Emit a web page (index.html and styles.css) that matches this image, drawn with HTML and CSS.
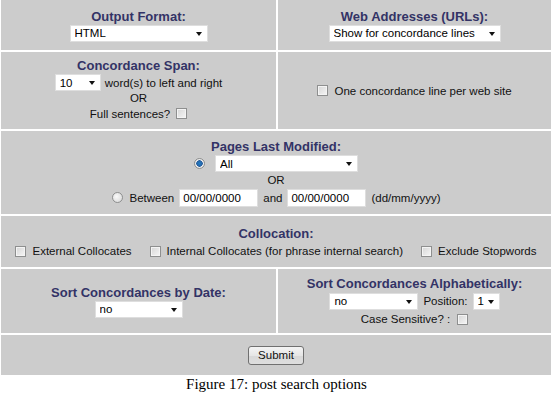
FILE: index.html
```html
<!DOCTYPE html>
<html>
<head>
<meta charset="utf-8">
<title>Post search options</title>
<link rel="stylesheet" href="styles.css">
</head>
<body>
<form class="options">
  <div class="cell">
    <h2 class="heading">Output Format:</h2>
    <span class="select w-format"><select><option>HTML</option></select></span>
  </div>
  <div class="cell">
    <h2 class="heading">Web Addresses (URLs):</h2>
    <span class="select w-urls"><select><option>Show for concordance lines</option></select></span>
  </div>

  <div class="cell">
    <h2 class="heading">Concordance Span:</h2>
    <div class="line">
      <span class="select w-span"><select><option>10</option></select></span>
      <span>word(s) to left and right</span>
    </div>
    <div class="or">OR</div>
    <label class="line tall">Full sentences? <input type="checkbox" class="cb"></label>
  </div>
  <div class="cell">
    <label class="line check"><input type="checkbox" class="cb"> One concordance line per web site</label>
  </div>

  <div class="cell wide pages">
    <h2 class="heading">Pages Last Modified:</h2>
    <div class="line">
      <input type="radio" name="when" class="radio" checked>
      <span class="select w-pages"><select><option>All</option></select></span>
    </div>
    <div class="or">OR</div>
    <div class="line between">
      <input type="radio" name="when" class="radio">
      <span>Between</span>
      <input type="text" class="date" value="00/00/0000">
      <span>and</span>
      <input type="text" class="date" value="00/00/0000">
      <span>(dd/mm/yyyy)</span>
    </div>
  </div>

  <div class="cell wide colloc">
    <h2 class="heading">Collocation:</h2>
    <div class="line checks">
      <label class="check"><input type="checkbox" class="cb"> External Collocates</label>
      <label class="check"><input type="checkbox" class="cb"> Internal Collocates (for phrase internal search)</label>
      <label class="check"><input type="checkbox" class="cb"> Exclude Stopwords</label>
    </div>
  </div>

  <div class="cell">
    <h2 class="heading">Sort Concordances by Date:</h2>
    <span class="select w-date"><select><option>no</option></select></span>
  </div>
  <div class="cell alpha">
    <h2 class="heading">Sort Concordances Alphabetically:</h2>
    <div class="line">
      <span class="select w-alpha"><select><option>no</option></select></span>
      <span>Position:</span>
      <span class="select w-pos"><select><option>1</option></select></span>
    </div>
    <label class="line">Case Sensitive? : <input type="checkbox" class="cb"></label>
  </div>

  <div class="cell wide">
    <button type="button" class="submit">Submit</button>
  </div>
</form>
<p class="caption">Figure 17: post search options</p>
</body>
</html>
```
FILE: styles.css
```css
body {
  margin: 0;
  width: 553px;
  background: #fff;
  font-family: "Liberation Sans", Arial, sans-serif;
  font-size: 11.5px;
  color: #111;
}
*, *:before, *:after { box-sizing: border-box; }

.options {
  display: grid;
  grid-template-columns: 275px 273px;
  grid-template-rows: 50px 77px 83px 51px 64px 40px;
  gap: 2px;
  margin: 0;
  padding-left: 1px;
}
.cell {
  background: #cccccc;
  display: flex;
  flex-direction: column;
  align-items: center;
  justify-content: center;
}
.wide { grid-column: 1 / -1; }

.heading {
  margin: 0;
  font-size: 13px;
  font-weight: bold;
  line-height: 16px;
  color: #333366;
}
.line {
  display: flex;
  align-items: center;
  gap: 4px;
  height: 18px;
}
.line.tall { height: 20px; }
.or { line-height: 12px; }
.pages .or { line-height: 15px; }
.pages .heading { line-height: 17px; }
.pages .line { height: 18px; }
.pages .line.between { height: 20px; gap: 5px; }
.colloc { padding-top: 3px; }
.alpha { padding-top: 2px; }
.alpha .line { gap: 5px; }

/* selects: flat white box with a small black arrow */
.select {
  position: relative;
  display: inline-block;
  height: 17px;
}
.select select {
  appearance: none;
  -webkit-appearance: none;
  width: 100%;
  height: 17px;
  margin: 0;
  padding: 0 0 0 4px;
  border: 1px solid #dedede;
  border-radius: 0;
  background: #fff;
  font-family: inherit;
  font-size: 11.5px;
  color: #000;
}
.select:after {
  content: "";
  position: absolute;
  right: 6px;
  top: 7px;
  border-left: 3.5px solid transparent;
  border-right: 3.5px solid transparent;
  border-top: 4px solid #111;
  pointer-events: none;
}
.w-format { width: 138px; }
.w-urls { width: 172px; }
.w-span { width: 46px; }
.w-pages { width: 143px; margin-left: 4px; }
.w-date { width: 88px; }
.w-alpha { width: 89px; }
.w-pos { width: 27px; }

/* checkboxes and radios */
.cb {
  appearance: none;
  -webkit-appearance: none;
  width: 11px;
  height: 11px;
  margin: 0 0 0 2px;
  border: 1px solid #8e8f8f;
  box-shadow: inset 0 0 0 1px #f4f4f4;
  background: linear-gradient(135deg, #d6d6d6, #f6f6f6);
}
.check {
  display: inline-flex;
  align-items: center;
  gap: 6px;
}
.check .cb { margin: 0; }
.checks { gap: 18px; }

.radio {
  appearance: none;
  -webkit-appearance: none;
  width: 11px;
  height: 11px;
  margin: 0 2px 0 0;
  border: 1px solid #8e8f8f;
  border-radius: 50%;
  background: radial-gradient(circle at 40% 40%, #fafafa, #d4d4d4);
}
.radio:checked {
  background: radial-gradient(circle, #1d7fc9 0, #2a5f9e 3px, #f0f0f0 3.5px, #cfcfcf 100%);
}

.date {
  width: 79px;
  height: 18px;
  margin: 0;
  padding: 0 0 0 3px;
  border: 1px solid #dedede;
  background: #fff;
  font-family: inherit;
  font-size: 11.5px;
  color: #000;
}

.submit {
  width: 56px;
  height: 19px;
  padding: 0;
  border: 1px solid #707070;
  border-radius: 3px;
  background: linear-gradient(#f4f4f4, #e6e6e6 50%, #d8d8d8 51%, #dedede);
  font-family: inherit;
  font-size: 11.5px;
  color: #111;
}

.caption {
  margin: 0;
  height: 19px;
  line-height: 19px;
  text-align: center;
  font-family: "Liberation Serif", "Times New Roman", serif;
  font-size: 15px;
  color: #000;
}
```
